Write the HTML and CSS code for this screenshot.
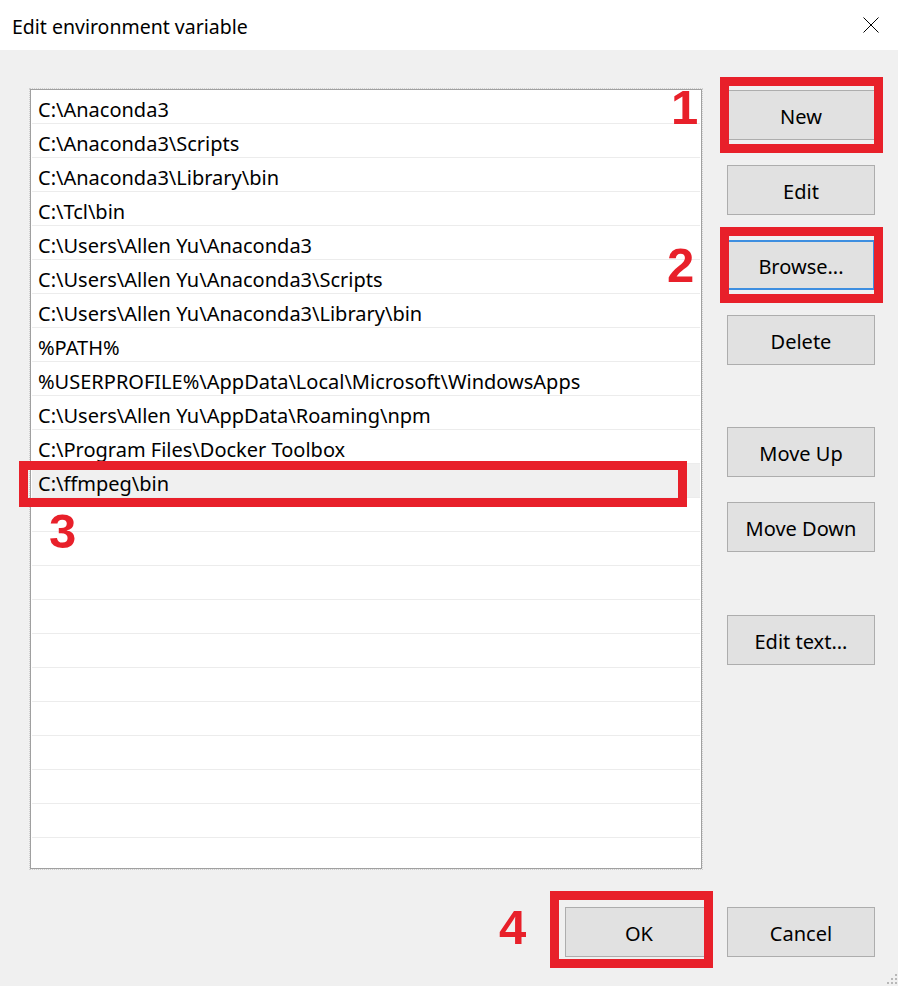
FILE: index.html
```html
<!DOCTYPE html>
<html lang="en">
<head>
<meta charset="utf-8">
<title>Edit environment variable</title>
<link rel="stylesheet" href="styles.css">
</head>
<body>
<div class="window">
  <header class="titlebar">
    <span class="title">Edit environment variable</span>
    <svg class="close" width="16" height="16" viewBox="0 0 16 16" aria-hidden="true">
      <path d="M0.5 0.5 L15.5 15.5 M15.5 0.5 L0.5 15.5" stroke="#000" stroke-width="1" fill="none"/>
    </svg>
  </header>

  <main class="main">
    <div class="list">
      <div class="row">C:\Anaconda3</div>
      <div class="row">C:\Anaconda3\Scripts</div>
      <div class="row">C:\Anaconda3\Library\bin</div>
      <div class="row">C:\Tcl\bin</div>
      <div class="row">C:\Users\Allen Yu\Anaconda3</div>
      <div class="row">C:\Users\Allen Yu\Anaconda3\Scripts</div>
      <div class="row">C:\Users\Allen Yu\Anaconda3\Library\bin</div>
      <div class="row">%PATH%</div>
      <div class="row">%USERPROFILE%\AppData\Local\Microsoft\WindowsApps</div>
      <div class="row">C:\Users\Allen Yu\AppData\Roaming\npm</div>
      <div class="row">C:\Program Files\Docker Toolbox</div>
      <div class="row selected">C:\ffmpeg\bin</div>
      <div class="row"></div>
      <div class="row"></div>
      <div class="row"></div>
      <div class="row"></div>
      <div class="row"></div>
      <div class="row"></div>
      <div class="row"></div>
      <div class="row"></div>
      <div class="row"></div>
      <div class="row"></div>
      <div class="row"></div>
    </div>

    <div class="side">
      <button class="btn">New</button>
      <button class="btn">Edit</button>
      <button class="btn focused">Browse...</button>
      <button class="btn">Delete</button>
      <button class="btn gap-lg">Move Up</button>
      <button class="btn">Move Down</button>
      <button class="btn gap-xl">Edit text...</button>
    </div>
  </main>

  <footer class="footer">
    <button class="btn">OK</button>
    <button class="btn">Cancel</button>
  </footer>

  <div class="mark box-new"></div>
  <div class="mark box-browse"></div>
  <div class="mark box-row"></div>
  <div class="mark box-ok"></div>
  <span class="num num-1">1</span>
  <span class="num num-2">2</span>
  <span class="num num-3">3</span>
  <span class="num num-4">4</span>

  <svg class="grip" width="14" height="14" viewBox="0 0 14 14" aria-hidden="true">
    <g fill="#b8b8b8">
      <rect x="11" y="2" width="2" height="2"/>
      <rect x="7" y="6" width="2" height="2"/>
      <rect x="11" y="6" width="2" height="2"/>
      <rect x="3" y="10" width="2" height="2"/>
      <rect x="7" y="10" width="2" height="2"/>
      <rect x="11" y="10" width="2" height="2"/>
    </g>
  </svg>
</div>
</body>
</html>
```

FILE: styles.css
```css
html, body {
  margin: 0;
  padding: 0;
  height: 100%;
  background: #f0f0f0;
  overflow: hidden;
}

.window {
  position: relative;
  width: 898px;
  height: 986px;
  font-family: "Segoe UI", "Noto Sans", "Open Sans", sans-serif;
  font-size: 20px;
  color: #000;
  display: flex;
  flex-direction: column;
}

.titlebar {
  height: 50px;
  flex: none;
  background: #fff;
  display: flex;
  align-items: center;
  justify-content: space-between;
  padding: 0 19px 0 12px;
  box-sizing: border-box;
}

.title {
  font-size: 19.5px;
  color: #000;
  position: relative;
  top: 1px;
}

.close {
  display: block;
}

.main {
  display: flex;
  align-items: flex-start;
  gap: 25px;
  padding: 39px 0 0 30px;
}

.list {
  width: 672px;
  height: 780px;
  box-sizing: border-box;
  border: 1px solid #a0a0a0;
  background: #fff;
  overflow: hidden;
  outline: 1px dotted #cfcfcf;
}

.row {
  height: 26px;
  line-height: 26px;
  padding-top: 7px;
  margin: 0 1px;
  padding-left: 6px;
  border-bottom: 1px solid #ececec;
  white-space: nowrap;
}

.row.selected {
  background: #f0f0f0;
}

.side {
  display: flex;
  flex-direction: column;
  gap: 25px;
  padding-top: 1px;
  width: 148px;
}

.btn {
  width: 148px;
  height: 50px;
  box-sizing: border-box;
  margin: 0;
  padding: 2px 0 0;
  background: #e1e1e1;
  border: 1px solid #adadad;
  border-radius: 0;
  font: inherit;
  color: #000;
}

.btn.focused {
  border: 2px solid #3d8ee0;
}

.btn.gap-lg {
  margin-top: 37px;
}

.btn.gap-xl {
  margin-top: 38px;
}

.footer {
  display: flex;
  justify-content: flex-end;
  gap: 14px;
  padding: 38px 23px 0 0;
}

/* annotation overlays */
.mark {
  position: absolute;
  box-sizing: border-box;
  border: 9px solid #e8202a;
  pointer-events: none;
}

.box-new {
  left: 720px;
  top: 77px;
  width: 163px;
  height: 76px;
}

.box-browse {
  left: 720px;
  top: 227px;
  width: 163px;
  height: 76px;
}

.box-row {
  left: 19px;
  top: 461px;
  width: 668px;
  height: 46px;
}

.box-ok {
  left: 550px;
  top: 891px;
  width: 163px;
  height: 77px;
}

.num {
  position: absolute;
  font-family: "Liberation Sans", Arial, sans-serif;
  font-weight: bold;
  font-size: 49px;
  line-height: 49px;
  color: #e8202a;
}

.num-1 { left: 671px; top: 83px; }
.num-2 { left: 667px; top: 241px; }
.num-3 { left: 49px; top: 507px; }
.num-4 { left: 499px; top: 903px; }

.grip {
  position: absolute;
  right: 0;
  bottom: 0;
}
```
